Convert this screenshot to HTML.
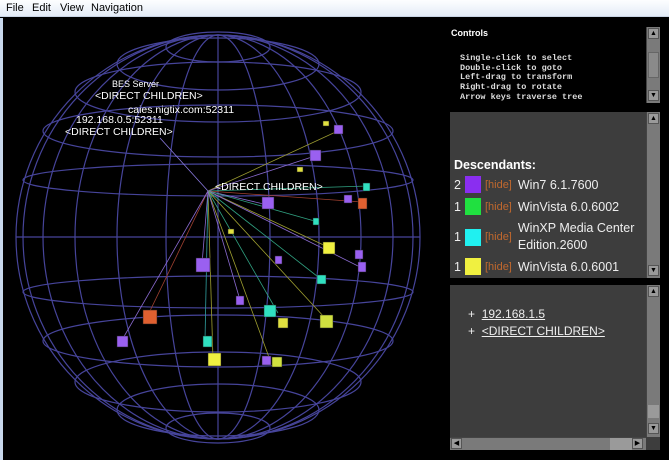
<!DOCTYPE html>
<html><head><meta charset="utf-8"><style>
*{margin:0;padding:0;box-sizing:border-box}
body{width:669px;height:460px;background:#000;overflow:hidden;font-family:"Liberation Sans",sans-serif;position:relative}
#menu{position:absolute;left:0;top:0;width:669px;height:17px;background:linear-gradient(#fdfeff,#e4ecf7);border-bottom:1px solid #c8d4e4;font-size:11px;color:#000}
#menu span{position:absolute;top:2px}
.sb{position:absolute;background:#7a7a7a;border-left:1px solid #444}
.arr{position:absolute;left:1px;width:11px;height:11px;background:#9a9a9a;border:1px solid #555;font-size:7px;color:#000;text-align:center;line-height:10px}
.mono{font-family:"Liberation Mono",monospace;font-size:8.5px;color:#ddd;line-height:9.7px;font-weight:bold}
.p{position:absolute;background:#3d3d3d}
.row{position:absolute;left:4px;font-size:12.5px;color:#eee;display:flex;align-items:center}
.sw{display:inline-block;width:16px;height:17px;margin:0 4px 0 4px}
.hd{color:#c0682e;font-size:11px;margin-right:6px}
.lk{color:#eee;text-decoration:underline;font-size:12px}
</style></head><body>
<div id="menu"><span style="left:6px">File</span><span style="left:32px">Edit</span><span style="left:60px">View</span><span style="left:91px">Navigation</span></div>
<div style="position:absolute;left:0;top:18px;width:3px;height:442px;background:#c8d8ec"></div>
<svg style="position:absolute;left:0;top:0" width="446" height="460">
<g fill="none" stroke="#46449a" stroke-width="1.2">
<circle cx="218" cy="237" r="202"/>
<line x1="16" y1="237" x2="420" y2="237"/>
<ellipse cx="218" cy="180" rx="195" ry="16"/>
<ellipse cx="218" cy="131" rx="175" ry="26"/>
<ellipse cx="218" cy="92" rx="143" ry="30"/>
<ellipse cx="218" cy="64" rx="101" ry="26"/>
<ellipse cx="218" cy="47" rx="52" ry="15"/>
<ellipse cx="218" cy="292" rx="195" ry="16"/>
<ellipse cx="218" cy="341" rx="175" ry="26"/>
<ellipse cx="218" cy="382" rx="143" ry="30"/>
<ellipse cx="218" cy="410" rx="101" ry="26"/>
<ellipse cx="218" cy="428" rx="52" ry="15"/>
<ellipse cx="218" cy="237" rx="52" ry="202"/>
<ellipse cx="218" cy="237" rx="101" ry="202"/>
<ellipse cx="218" cy="237" rx="143" ry="202"/>
<ellipse cx="218" cy="237" rx="175" ry="202"/>
<ellipse cx="218" cy="237" rx="195" ry="202"/>
<line x1="218" y1="35" x2="218" y2="439"/>
</g>
<g stroke-width="0.8">
<line x1="208" y1="191" x2="160" y2="138" stroke="#8a7ae0"/>
<line x1="208" y1="191" x2="340" y2="130" stroke="#9a9a30"/>
<line x1="208" y1="191" x2="318" y2="155" stroke="#8a6ad0"/>
<line x1="208" y1="191" x2="368" y2="186" stroke="#30a080"/>
<line x1="208" y1="191" x2="362" y2="202" stroke="#a04030"/>
<line x1="208" y1="191" x2="268" y2="205" stroke="#8a6ad0"/>
<line x1="208" y1="191" x2="318" y2="222" stroke="#30a080"/>
<line x1="208" y1="191" x2="330" y2="248" stroke="#a0a030"/>
<line x1="208" y1="191" x2="362" y2="268" stroke="#8a6ad0"/>
<line x1="208" y1="191" x2="322" y2="280" stroke="#30a080"/>
<line x1="208" y1="191" x2="325" y2="318" stroke="#a0a030"/>
<line x1="208" y1="191" x2="278" y2="313" stroke="#30a080"/>
<line x1="208" y1="191" x2="270" y2="360" stroke="#a0a030"/>
<line x1="208" y1="191" x2="240" y2="300" stroke="#8a6ad0"/>
<line x1="208" y1="191" x2="213" y2="360" stroke="#a0a030"/>
<line x1="208" y1="191" x2="205" y2="340" stroke="#30a0a0"/>
<line x1="208" y1="191" x2="148" y2="315" stroke="#a04030"/>
<line x1="208" y1="191" x2="122" y2="340" stroke="#8a6ad0"/>
<line x1="208" y1="191" x2="202" y2="264" stroke="#8a6ad0"/>
</g>
<g stroke="#222" stroke-width="0.5">
<rect x="334" y="125" width="9" height="9" fill="#9a60f0"/>
<rect x="323" y="121" width="6" height="5" fill="#e0e040"/>
<rect x="310" y="150" width="11" height="11" fill="#9a60f0"/>
<rect x="297" y="167" width="6" height="5" fill="#e0e040"/>
<rect x="363" y="183" width="7" height="8" fill="#30e0c0"/>
<rect x="344" y="195" width="8" height="8" fill="#9a60f0"/>
<rect x="358" y="198" width="9" height="11" fill="#e06030"/>
<rect x="262" y="197" width="12" height="12" fill="#9a60f0"/>
<rect x="313" y="218" width="6" height="7" fill="#30e0c0"/>
<rect x="228" y="229" width="6" height="5" fill="#e0e040"/>
<rect x="323" y="242" width="12" height="12" fill="#f0f040"/>
<rect x="355" y="250" width="8" height="9" fill="#9a60f0"/>
<rect x="358" y="262" width="8" height="10" fill="#9a60f0"/>
<rect x="275" y="256" width="7" height="8" fill="#9a60f0"/>
<rect x="196" y="258" width="14" height="14" fill="#9a60f0"/>
<rect x="317" y="275" width="9" height="9" fill="#30e0c0"/>
<rect x="236" y="296" width="8" height="9" fill="#9a60f0"/>
<rect x="264" y="305" width="12" height="12" fill="#30e0c0"/>
<rect x="278" y="318" width="10" height="10" fill="#e0e040"/>
<rect x="320" y="315" width="13" height="13" fill="#d0e040"/>
<rect x="143" y="310" width="14" height="14" fill="#e06030"/>
<rect x="117" y="336" width="11" height="11" fill="#9a60f0"/>
<rect x="203" y="336" width="9" height="11" fill="#30e0c0"/>
<rect x="208" y="353" width="13" height="13" fill="#f0f040"/>
<rect x="262" y="356" width="9" height="9" fill="#9a60f0"/>
<rect x="272" y="357" width="10" height="10" fill="#d0e040"/>
</g>
<g fill="#fff" font-family="Liberation Sans,sans-serif" font-size="10.5">
<text x="112" y="87" font-size="9">BES Server</text>
<text x="95" y="99">&lt;DIRECT CHILDREN&gt;</text>
<text x="128" y="113">caies.nigtix.com:52311</text>
<text x="76" y="123">192.168.0.5:52311</text>
<text x="65" y="135">&lt;DIRECT CHILDREN&gt;</text>
<text x="215" y="190">&lt;DIRECT CHILDREN&gt;</text>
</g>
</svg>
<div style="position:absolute;left:451px;top:28px;font-size:9px;font-weight:bold;color:#fff">Controls</div>
<div class="mono" style="position:absolute;left:460px;top:54px">Single-click to select<br>Double-click to goto<br>Left-drag to transform<br>Right-drag to rotate<br>Arrow keys traverse tree</div>
<div class="sb" style="left:646px;top:27px;width:14px;height:76px"><div class="arr" style="top:1px">▲</div><div class="arr" style="top:63px">▼</div><div style="position:absolute;left:1px;top:25px;width:11px;height:26px;background:#8a8a8a;border:1px solid #666"></div></div>
<div class="p" style="left:450px;top:112px;width:210px;height:166px">
<div style="position:absolute;left:4px;top:46px;font-size:12.5px;font-weight:bold;color:#fff">Descendants:</div>
<div class="row" style="top:64px">2<span class="sw" style="background:#8a2ef0"></span><span class="hd">[hide]</span>Win7 6.1.7600</div>
<div class="row" style="top:86px">1<span class="sw" style="background:#20e040"></span><span class="hd">[hide]</span>WinVista 6.0.6002</div>
<div class="row" style="top:108px;line-height:17px">1<span class="sw" style="background:#20f0f0"></span><span class="hd">[hide]</span><span>WinXP Media Center<br>Edition.2600</span></div>
<div class="row" style="top:146px">1<span class="sw" style="background:#f0f040"></span><span class="hd">[hide]</span>WinVista 6.0.6001</div>
<div class="sb" style="left:196px;top:0;width:14px;height:166px"><div class="arr" style="top:1px">▲</div><div class="arr" style="top:153px">▼</div></div>
</div>
<div class="p" style="left:450px;top:285px;width:210px;height:165px">
<div style="position:absolute;left:18px;top:22px;font-size:12px;color:#eee">+&nbsp; <span class="lk">192.168.1.5</span></div>
<div style="position:absolute;left:18px;top:39px;font-size:12px;color:#eee">+&nbsp; <span class="lk">&lt;DIRECT CHILDREN&gt;</span></div>
<div class="sb" style="left:196px;top:0;width:14px;height:152px"><div class="arr" style="top:1px">▲</div><div class="arr" style="top:138px">▼</div><div style="position:absolute;left:1px;top:120px;width:11px;height:13px;background:#9a9a9a"></div></div>
<div class="sb" style="left:0;top:152px;width:196px;height:13px;border-left:0;border-top:1px solid #444"><div class="arr" style="top:0;left:1px">◀</div><div class="arr" style="top:0;left:182px">▶</div><div style="position:absolute;left:160px;top:0;width:22px;height:12px;background:#9a9a9a"></div></div>
</div>
</body></html>
